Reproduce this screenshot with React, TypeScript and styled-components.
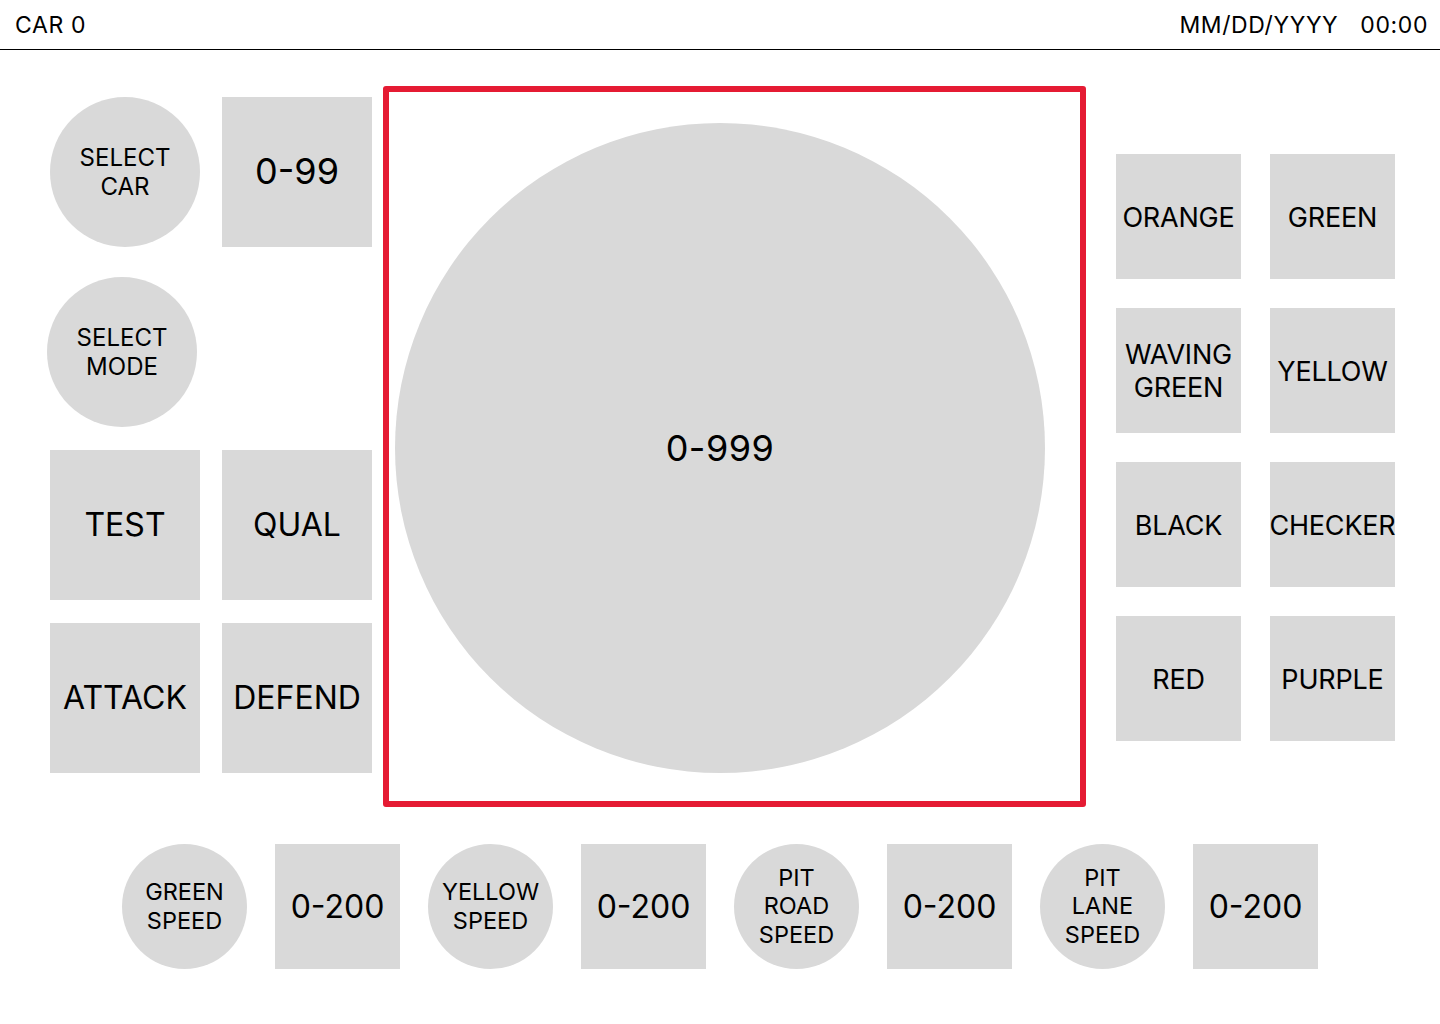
import React from 'react';
import styled, {createGlobalStyle} from "styled-components";

const GlobalStyle = createGlobalStyle`
  html, body {
    margin: 0;
    padding: 0;
    background: #ffffff;
  }

  body {
    font-family: Inter, "Noto Sans", "Liberation Sans", sans-serif;
    color: #000000;
  }
`;

const gray = "#d9d9d9";
const red = "#e51b33";

const Page = styled.div`
  width: 1440px;
  height: 1024px;
  overflow: hidden;
`;

const Header = styled.header`
  display: flex;
  justify-content: space-between;
  align-items: center;
  height: 49px;
  padding: 0 12px 0 15px;
  border-bottom: 1px solid #000;
  font-size: 23px;
  letter-spacing: 0.6px;
`;

const Clock = styled.div`
  display: flex;
  gap: 22px;
`;

const Main = styled.div`
  display: flex;
  align-items: flex-start;
`;

const LeftPanel = styled.div`
  display: grid;
  grid-template-columns: 150px 150px;
  grid-template-rows: 150px 157px 150px 150px;
  column-gap: 22px;
  row-gap: 23px;
  margin: 47px 0 0 50px;
`;

const Tile = styled.div<{ $size: number; $font: number; $round?: boolean }>`
  display: flex;
  align-items: center;
  justify-content: center;
  flex-shrink: 0;
  box-sizing: border-box;
  width: ${p => p.$size}px;
  height: ${p => p.$size}px;
  border-radius: ${p => (p.$round ? "50%" : "0")};
  background: ${gray};
  font-size: ${p => p.$font}px;
  line-height: 1.22;
  text-align: center;
`;

const ModeButton = styled(Tile)`
  align-self: end;
  margin-left: -3px;
`;

const FlagButton = styled(Tile)`
  padding-top: 3px;
  letter-spacing: -0.2px;
`;

const Spacer = styled.div``;

const Frame = styled.div`
  display: flex;
  align-items: center;
  justify-content: center;
  box-sizing: border-box;
  width: 703px;
  height: 721px;
  margin: 36px 0 0 11px;
  border: 6px solid ${red};
  border-radius: 3px;
`;

const Dial = styled.div`
  display: flex;
  align-items: center;
  justify-content: center;
  flex-shrink: 0;
  width: 650px;
  height: 650px;
  margin: 2px 0 0 -29px;
  border-radius: 50%;
  background: ${gray};
  font-size: 36px;
  letter-spacing: 0.5px;
`;

const FlagGrid = styled.div`
  display: grid;
  grid-template-columns: 125px 125px;
  gap: 29px;
  margin: 104px 0 0 30px;
`;

const BottomRow = styled.div`
  display: flex;
  align-items: center;
  gap: 28px;
  margin: 37px 0 0 122px;
`;

const flags = [
    "ORANGE", "GREEN",
    ["WAVING", "GREEN"], "YELLOW",
    "BLACK", "CHECKER",
    "RED", "PURPLE",
];

const speeds = [
    ["GREEN", "SPEED"],
    ["YELLOW", "SPEED"],
    ["PIT", "ROAD", "SPEED"],
    ["PIT", "LANE", "SPEED"],
];

const Lines: React.FC<{ text: string | string[] }> = ({text}) => (
    <span>
        {Array.isArray(text)
            ? text.map((t, i) => <React.Fragment key={i}>{i > 0 && <br/>}{t}</React.Fragment>)
            : text}
    </span>
);

export default function App() {
    return (
        <Page>
            <GlobalStyle/>
            <Header>
                <span>CAR 0</span>
                <Clock>
                    <span>MM/DD/YYYY</span>
                    <span>00:00</span>
                </Clock>
            </Header>
            <Main>
                <LeftPanel>
                    <Tile $size={150} $font={24} $round><Lines text={["SELECT", "CAR"]}/></Tile>
                    <Tile $size={150} $font={36}>0-99</Tile>
                    <ModeButton $size={150} $font={24} $round>
                        <Lines text={["SELECT", "MODE"]}/>
                    </ModeButton>
                    <Spacer/>
                    <Tile $size={150} $font={32}>TEST</Tile>
                    <Tile $size={150} $font={32}>QUAL</Tile>
                    <Tile $size={150} $font={32}>ATTACK</Tile>
                    <Tile $size={150} $font={32}>DEFEND</Tile>
                </LeftPanel>
                <Frame>
                    <Dial>0-999</Dial>
                </Frame>
                <FlagGrid>
                    {flags.map((f, i) => (
                        <FlagButton key={i} $size={125} $font={27}><Lines text={f}/></FlagButton>
                    ))}
                </FlagGrid>
            </Main>
            <BottomRow>
                {speeds.map((s, i) => (
                    <React.Fragment key={i}>
                        <Tile $size={125} $font={23.5} $round><Lines text={s}/></Tile>
                        <Tile $size={125} $font={32}>0-200</Tile>
                    </React.Fragment>
                ))}
            </BottomRow>
        </Page>
    );
}
